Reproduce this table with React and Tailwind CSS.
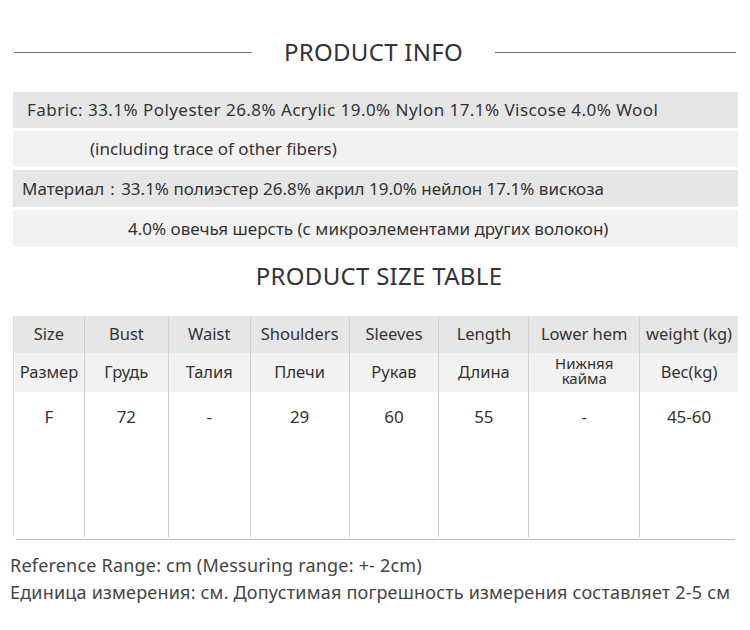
import React from 'react';

const info = [
  { text: 'Fabric: 33.1% Polyester 26.8% Acrylic 19.0% Nylon 17.1% Viscose 4.0% Wool', bg: 'bg-[#e6e6e6]', pad: 'pl-[14px] tracking-[0.45px]', h: 'h-[36px]' },
  { text: '(including trace of other fibers)', bg: 'bg-[#f2f2f2]', pad: 'pl-[77px]', h: 'h-[36px]' },
  { text: 'Материал：33.1% полиэстер 26.8% акрил 19.0% нейлон 17.1% вискоза', bg: 'bg-[#e6e6e6]', pad: 'pl-[9px]', h: 'h-[37px]' },
  { text: '4.0% овечья шерсть (с микроэлементами других волокон)', bg: 'bg-[#f2f2f2]', pad: 'pl-[115px]', h: 'h-[37px]' },
];

const cols = [
  { en: 'Size', ru: 'Размер', val: 'F' },
  { en: 'Bust', ru: 'Грудь', val: '72' },
  { en: 'Waist', ru: 'Талия', val: '-' },
  { en: 'Shoulders', ru: 'Плечи', val: '29' },
  { en: 'Sleeves', ru: 'Рукав', val: '60' },
  { en: 'Length', ru: 'Длина', val: '55' },
  { en: 'Lower hem', ru: 'Нижняя кайма', val: '-', small: true },
  { en: 'weight (kg)', ru: 'Вес(kg)', val: '45-60' },
];

const widths = ['w-[70px]', 'w-[84px]', 'w-[82px]', 'w-[99px]', 'w-[90px]', 'w-[90px]', 'w-[111px]', 'w-[99px]'];

const Title = ({ children, lines }) => (
  <div className="flex items-center h-[52px]">
    {lines && <div className="h-px bg-[#777] w-[238px] ml-[14px]" />}
    <div className="flex-1 text-center text-[24px] tracking-[0.3px] text-[#333]">{children}</div>
    {lines && <div className="h-px bg-[#777] w-[241px] mr-[14px]" />}
  </div>
);

export default function App() {
  return (
    <div className="w-[750px] h-[630px] bg-white text-[#333] overflow-hidden" style={{ fontFamily: '"Noto Sans", sans-serif' }}>
      <div className="pt-[26px]">
        <Title lines>PRODUCT INFO</Title>
      </div>

      {/* fabric rows */}
      <div className="mt-[14px] ml-[13px] w-[725px] flex flex-col gap-[3px]">
        {info.map((r, i) => (
          <div key={i} className={`${r.bg} ${r.pad} ${r.h} flex items-center text-[17px] text-[#333]`}>
            {r.text}
          </div>
        ))}
      </div>

      <div className="mt-[3px] pl-[8px] tracking-[0.5px]">
        <Title>PRODUCT SIZE TABLE</Title>
      </div>

      {/* size table */}
      <div className="mt-[14px] ml-[13px] w-[725px] flex border-l border-[#ddd]">
        {cols.map((c, i) => (
          <div key={i} className={`${widths[i]} flex flex-col ${i > 0 ? 'border-l border-[#cfcfcf]' : ''}`}>
            <div className="h-[37px] bg-[#e6e6e6] flex items-center justify-center text-[16.5px]">{c.en}</div>
            <div className="h-[39px] bg-[#f2f2f2] flex items-center justify-center text-center">
              {c.small ? (
                <span className="text-[15px] leading-[15px] w-[62px] -mt-[3px]">{c.ru}</span>
              ) : (
                <span className="text-[16.5px]">{c.ru}</span>
              )}
            </div>
            <div className="h-[145px] pt-[12px] text-center text-[17px]">{c.val}</div>
          </div>
        ))}
      </div>
      <div className="ml-[16px] w-[719px] h-px bg-[#bbb] mt-[2px]" />

      <div className="mt-[12px] ml-[10px] text-[18px] text-[#444] leading-[27px] tracking-[0.2px]">
        <div>Reference Range: cm (Messuring range: +- 2cm)</div>
        <div>Единица измерения: см. Допустимая погрешность измерения составляет 2-5 см</div>
      </div>
    </div>
  );
}
